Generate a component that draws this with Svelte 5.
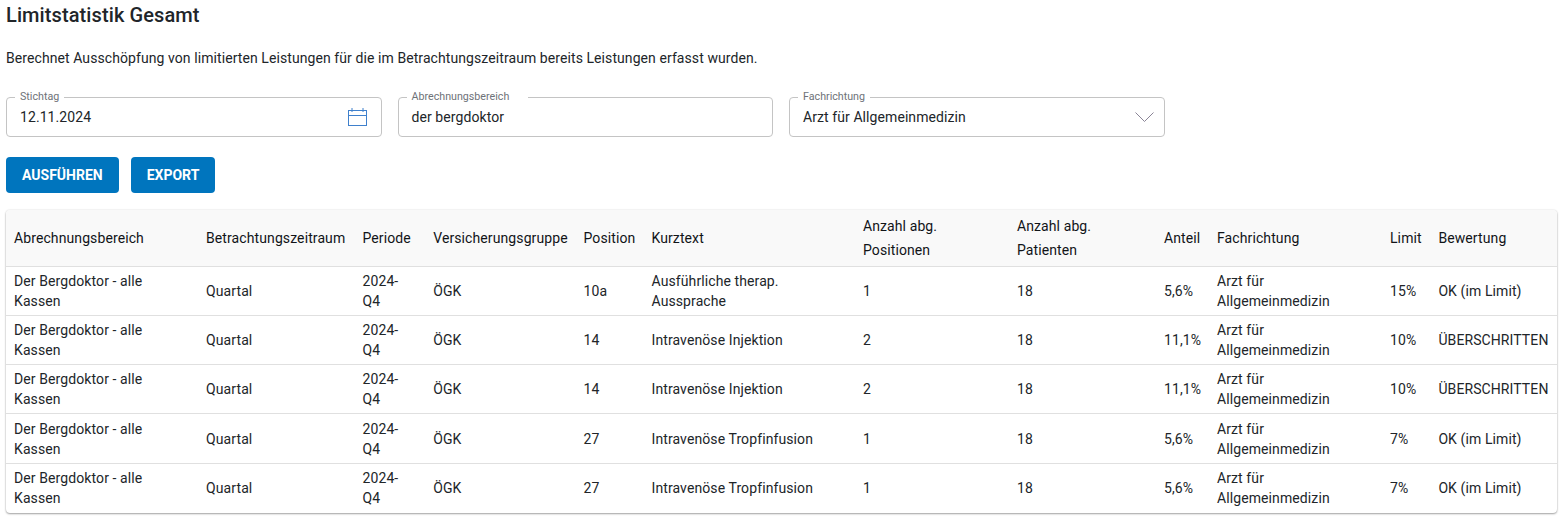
<script lang="ts">
	const columns = [
		{ label: 'Abrechnungsbereich', width: 192 },
		{ label: 'Betrachtungszeitraum', width: 156.5 },
		{ label: 'Periode', width: 70.7 },
		{ label: 'Versicherungsgruppe', width: 150.3 },
		{ label: 'Position', width: 68 },
		{ label: 'Kurztext', width: 211.5 },
		{ label: 'Anzahl abg. Positionen', width: 154 },
		{ label: 'Anzahl abg. Patienten', width: 147 },
		{ label: 'Anteil', width: 53 },
		{ label: 'Fachrichtung', width: 173 },
		{ label: 'Limit', width: 48.4 },
		{ label: 'Bewertung', width: 127.1 }
	];

	const rows = [
		['10a', 'Ausführliche therap. Aussprache', '1', '5,6%', '15%', 'OK (im Limit)'],
		['14', 'Intravenöse Injektion', '2', '11,1%', '10%', 'ÜBERSCHRITTEN'],
		['14', 'Intravenöse Injektion', '2', '11,1%', '10%', 'ÜBERSCHRITTEN'],
		['27', 'Intravenöse Tropfinfusion', '1', '5,6%', '7%', 'OK (im Limit)'],
		['27', 'Intravenöse Tropfinfusion', '1', '5,6%', '7%', 'OK (im Limit)']
	];
</script>

<div class="page">
	<h1>Limitstatistik Gesamt</h1>
	<p class="intro">
		Berechnet Ausschöpfung von limitierten Leistungen für die im Betrachtungszeitraum bereits Leistungen erfasst wurden.
	</p>

	<div class="filters">
		<fieldset class="field">
			<legend>Stichtag</legend>
			<span class="value">12.11.2024</span>
			<svg width="19" height="18" viewBox="0 0 19 18" fill="none" stroke="#3f80cc" stroke-width="1">
				<rect x="0.5" y="2.5" width="18" height="15" />
				<path d="M0.5 7.5h18M4 0v4M15 0v4" />
			</svg>
		</fieldset>
		<fieldset class="field">
			<legend class="legend-wide">Abrechnungsbereich</legend>
			<span class="value">der bergdoktor</span>
		</fieldset>
		<fieldset class="field">
			<legend>Fachrichtung</legend>
			<span class="value">Arzt für Allgemeinmedizin</span>
			<svg class="chevron" width="19" height="10" viewBox="0 0 19 10" fill="none" stroke="#8a8496" stroke-width="1">
				<path d="M0.5 0.5L9.5 9.5L18.5 0.5" />
			</svg>
		</fieldset>
	</div>

	<div class="actions">
		<button type="button">Ausführen</button>
		<button type="button">Export</button>
	</div>

	<div class="table-card">
		<table>
			<colgroup>
				{#each columns as column}
					<col style="width: {column.width}px" />
				{/each}
			</colgroup>
			<thead>
				<tr>
					{#each columns as column}
						<th>{column.label}</th>
					{/each}
				</tr>
			</thead>
			<tbody>
				{#each rows as [position, text, count, share, limit, rating]}
					<tr>
						<td class="area">Der Bergdoktor - alle Kassen</td>
						<td>Quartal</td>
						<td class="period">2024-Q4</td>
						<td>ÖGK</td>
						<td>{position}</td>
						<td>{text}</td>
						<td>{count}</td>
						<td>18</td>
						<td>{share}</td>
						<td>Arzt für Allgemeinmedizin</td>
						<td>{limit}</td>
						<td class="rating">{rating}</td>
					</tr>
				{/each}
			</tbody>
		</table>
	</div>
</div>

<style>
	:global(body) {
		background: #fff;
		color: #212529;
		font-family: Roboto, 'Liberation Sans', sans-serif;
	}

	.page {
		padding: 0 4px 16px 6px;
	}

	h1 {
		margin: 0;
		padding-top: 3px;
		font-size: 20px;
		line-height: 24px;
		font-weight: 500;
		letter-spacing: 0.1px;
	}

	.intro {
		margin: 21px 0 0;
		font-size: 14px;
		line-height: 20px;
		letter-spacing: 0.08px;
	}

	.filters {
		display: flex;
		gap: 16px;
		margin-top: 29px;
	}

	.field {
		display: flex;
		align-items: center;
		justify-content: space-between;
		box-sizing: border-box;
		flex: 0 0 375.5px;
		height: 46px;
		margin: -6px 0 0;
		padding: 0 14px 5px 13px;
		border: 1px solid #c4c4c4;
		border-radius: 4px;
		min-width: 0;
	}

	.field legend {
		height: 12px;
		margin-left: -5px;
		padding: 0 5px;
		font-size: 10.7px;
		line-height: 12px;
		color: #6e7278;
	}

	.field .legend-wide {
		padding-right: 19px;
	}

	.value {
		font-size: 14px;
		line-height: 20px;
		letter-spacing: 0.08px;
	}

	.chevron {
		margin-right: -4px;
	}

	.actions {
		display: flex;
		gap: 12px;
		margin-top: 20px;
	}

	button {
		height: 36px;
		padding: 0 16px;
		border: none;
		border-radius: 4px;
		background: #0075be;
		color: #fff;
		font-family: inherit;
		font-size: 14px;
		font-weight: 700;
		text-transform: uppercase;
		cursor: pointer;
	}

	.table-card {
		width: 1551px;
		margin-top: 17px;
		border-radius: 4px;
		overflow: hidden;
		box-shadow: 0 1px 2px rgba(0, 0, 0, 0.35), 0 0 2px rgba(0, 0, 0, 0.12);
	}

	table {
		width: 1551px;
		table-layout: fixed;
		border-collapse: collapse;
		font-size: 14px;
	}

	th {
		height: 56px;
		box-sizing: border-box;
		padding: 0 8px;
		background: #f9f9f9;
		color: #111418;
		font-weight: 400;
		line-height: 24px;
		letter-spacing: 0.1px;
		text-align: left;
		border-bottom: 1px solid #e0e0e0;
	}

	td {
		height: 49.33px;
		box-sizing: border-box;
		padding: 4px 8px;
		line-height: 20px;
		letter-spacing: 0.1px;
		border-bottom: 1px solid #e0e0e0;
	}

	tbody tr:last-child td {
		border-bottom: none;
	}

	td.area {
		padding-right: 32px;
	}

	td.period {
		padding-right: 20px;
	}

	td.rating {
		padding-right: 0;
	}
</style>
